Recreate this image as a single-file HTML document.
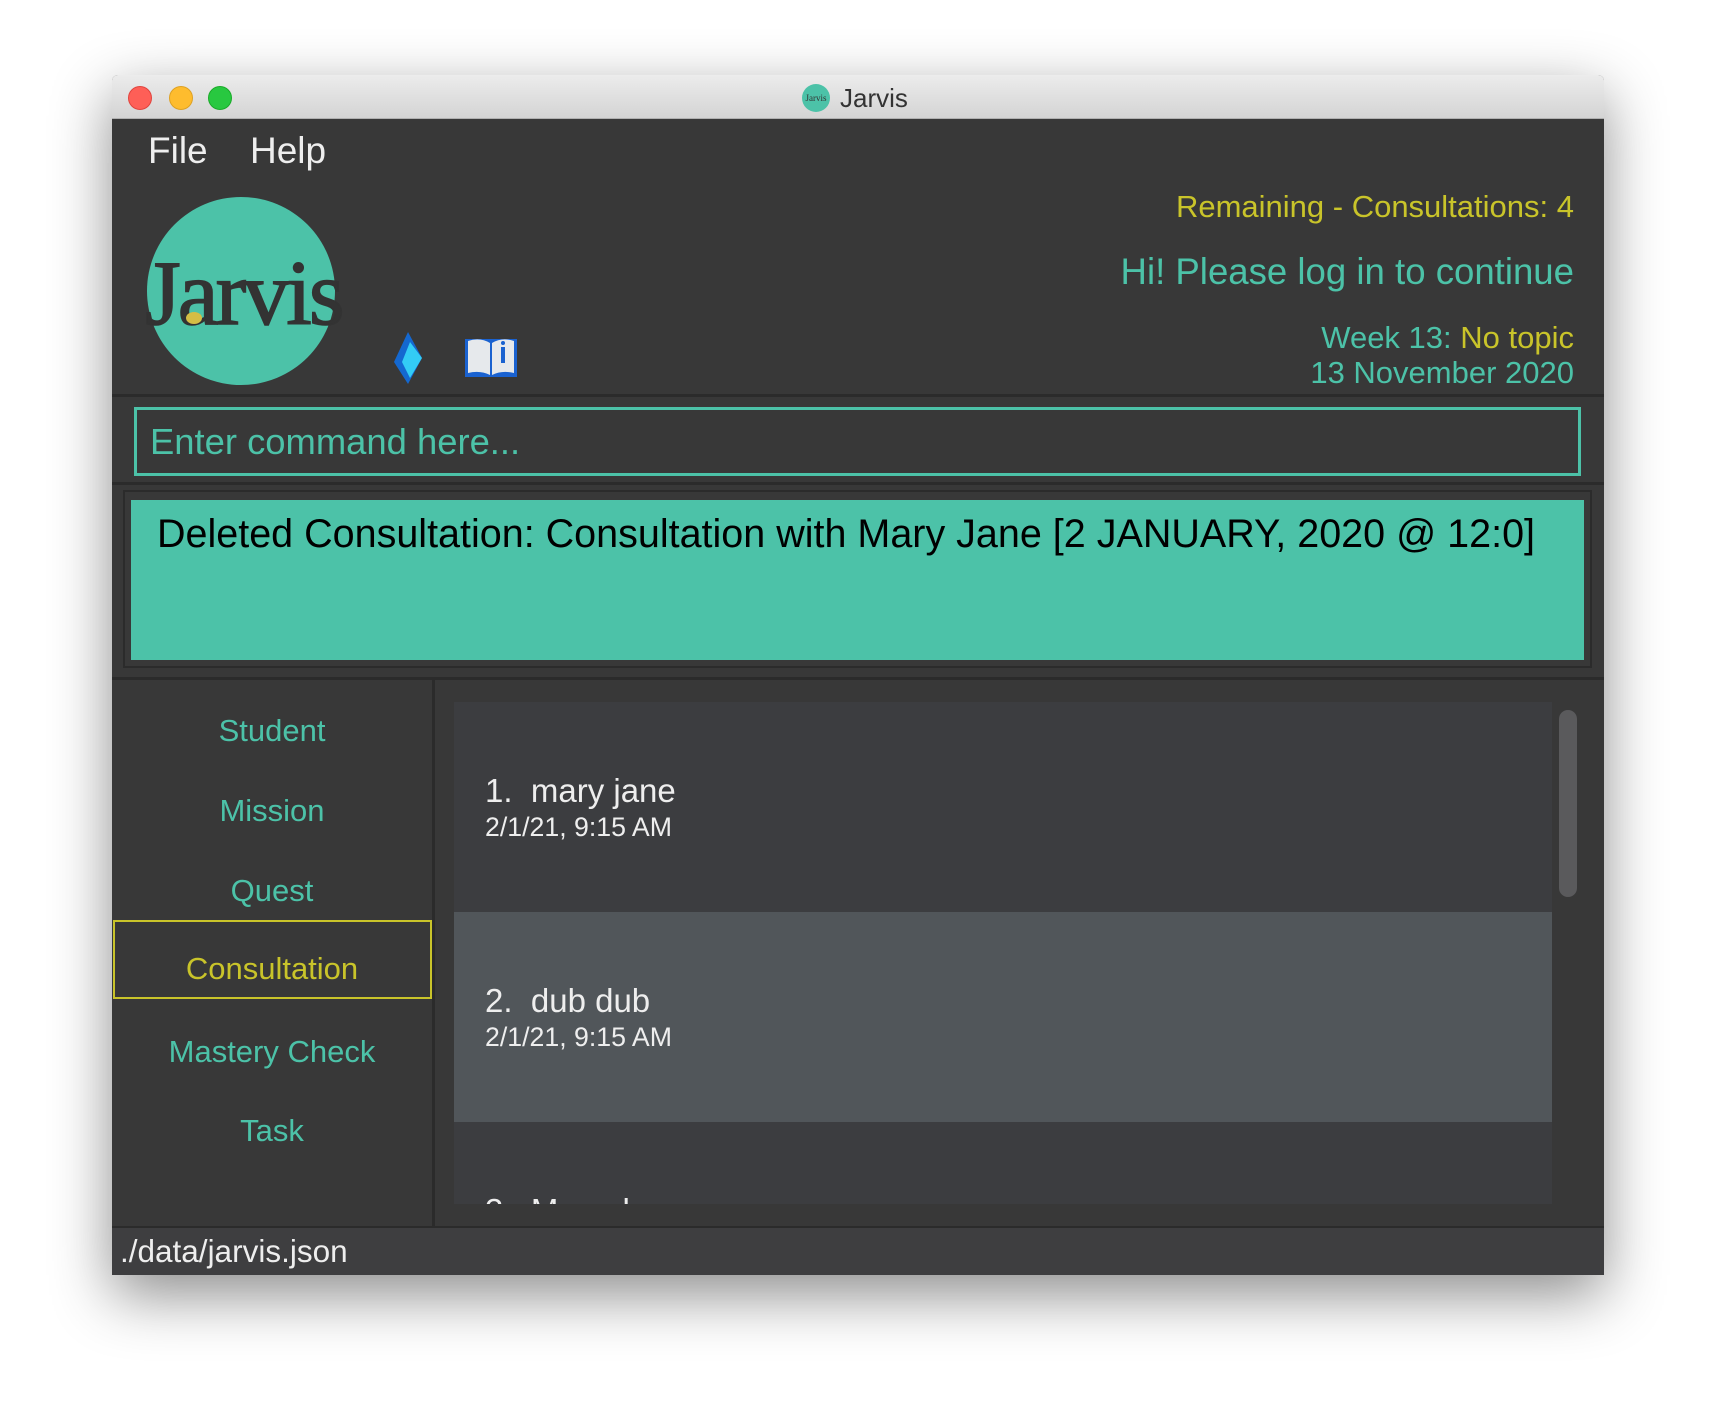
<!DOCTYPE html>
<html><head><meta charset="utf-8"><style>
*{margin:0;padding:0;box-sizing:border-box}
body{width:1716px;height:1424px;background:#fff;position:relative;overflow:hidden;font-family:"Liberation Sans",sans-serif}
.win{position:absolute;left:112px;top:75px;width:1492px;height:1200px;background:#383838;box-shadow:0 20px 60px rgba(0,0,0,.45);border-radius:6px 6px 0 0;overflow:hidden}
.title{position:absolute;left:0;top:0;width:100%;height:44px;background:linear-gradient(#ececec,#d4d4d4);border-bottom:1px solid #b0b0b0}
.tl{position:absolute;top:11px;width:24px;height:24px;border-radius:50%}
.a{position:absolute;white-space:nowrap}
.t{color:#4cc2a8}.y{color:#c9c42a}
</style></head><body>
<div class="win">
 <div class="title">
  <div class="tl" style="left:16px;background:#fe5f57;border:1px solid #e0443e"></div>
  <div class="tl" style="left:57px;background:#febc2e;border:1px solid #dea123"></div>
  <div class="tl" style="left:96px;background:#28c840;border:1px solid #1aab29"></div>
  <div class="a" style="left:690px;top:9px;width:28px;height:28px;border-radius:50%;background:#4cc2a8;font:9px 'Liberation Serif',serif;color:#333;text-align:center;line-height:28px">Jarvis</div>
  <div class="a" style="left:728px;top:8px;font-size:26px;color:#333">Jarvis</div>
 </div>
 <div class="a" style="left:36px;top:55px;font-size:37px;color:#eee">File</div>
 <div class="a" style="left:138px;top:55px;font-size:37px;color:#eee">Help</div>
 <div class="a" style="left:35px;top:122px;width:188px;height:188px;border-radius:50%;background:#4cc2a8"></div>
 <div class="a" style="left:33px;top:165px;font:92px 'Liberation Serif',serif;color:#333;letter-spacing:-3px;-webkit-text-stroke:1.5px #333">Jarvis</div>
 <div class="a" style="left:74px;top:237px;width:16px;height:12px;border-radius:50%;background:#d4bd45"></div>
 <svg class="a" style="left:280px;top:255px" width="32" height="56" viewBox="0 0 32 56"><polygon points="16,2 30,28 16,54 2,32" fill="#1468d0"/><polygon points="18,12 30,28 18,48 10,32" fill="#33ccf5"/></svg>
 <svg class="a" style="left:352px;top:260px" width="54" height="46" viewBox="0 0 54 46"><rect x="1" y="4" width="52" height="38" fill="#1a62d0"/><path d="M4 6 Q16 2 26 8 V40 Q16 35 4 38Z" fill="#e6e9ec"/><path d="M28 8 Q38 2 50 6 V38 Q38 35 28 40Z" fill="#e6e9ec"/><rect x="37" y="12" width="4" height="16" fill="#1a62d0"/><circle cx="39" cy="8" r="2" fill="#1a62d0"/></svg>
 <div class="a y" style="right:30px;top:114px;font-size:31px">Remaining - Consultations: 4</div>
 <div class="a t" style="right:30px;top:176px;font-size:36.6px">Hi! Please log in to continue</div>
 <div class="a" style="right:30px;top:245px;font-size:31px"><span class="t">Week 13: </span><span class="y">No topic</span></div>
 <div class="a t" style="right:30px;top:280px;font-size:31px">13 November 2020</div>
 <div class="a" style="left:0;top:319px;width:100%;height:3px;background:#2b2b2b"></div>
 <div class="a" style="left:22px;top:332px;width:1447px;height:69px;border:3px solid #4cc2a8"></div>
 <div class="a t" style="left:38px;top:346px;font-size:36.4px">Enter command here...</div>
 <div class="a" style="left:0;top:407px;width:100%;height:3px;background:#2b2b2b"></div>
 <div class="a" style="left:11px;top:415px;width:1469px;height:178px;border:2px solid #2b2b2b"></div>
 <div class="a" style="left:19px;top:425px;width:1453px;height:160px;background:#4cc2a8"></div>
 <div class="a" style="left:45px;top:437px;font-size:39.5px;color:#000">Deleted Consultation: Consultation with Mary Jane [2 JANUARY, 2020 @ 12:0]</div>
 <div class="a" style="left:0;top:602px;width:100%;height:3px;background:#2b2b2b"></div>
 <div class="a" style="left:320px;top:605px;width:3px;height:546px;background:#2b2b2b"></div>
 <div class="a t" style="left:0;width:320px;text-align:center;top:638px;font-size:31px">Student</div>
 <div class="a t" style="left:0;width:320px;text-align:center;top:718px;font-size:31px">Mission</div>
 <div class="a t" style="left:0;width:320px;text-align:center;top:798px;font-size:31px">Quest</div>
 <div class="a" style="left:1px;top:845px;width:319px;height:79px;border:2px solid #c9c42a"></div>
 <div class="a y" style="left:0;width:320px;text-align:center;top:876px;font-size:31px">Consultation</div>
 <div class="a t" style="left:0;width:320px;text-align:center;top:959px;font-size:31px">Mastery Check</div>
 <div class="a t" style="left:0;width:320px;text-align:center;top:1038px;font-size:31px">Task</div>
 <div class="a" style="left:342px;top:627px;width:1098px;height:502px;background:#3c3d40;overflow:hidden">
  <div class="a" style="left:0;top:210px;width:100%;height:210px;background:#51565a"></div>
  <div class="a" style="left:31px;top:70px;font-size:33px;color:#eee">1.&nbsp; mary jane</div>
  <div class="a" style="left:31px;top:110px;font-size:26.7px;color:#eee">2/1/21, 9:15 AM</div>
  <div class="a" style="left:31px;top:280px;font-size:33px;color:#eee">2.&nbsp; dub dub</div>
  <div class="a" style="left:31px;top:320px;font-size:26.7px;color:#eee">2/1/21, 9:15 AM</div>
  <div class="a" style="left:31px;top:490px;font-size:33px;color:#eee">3.&nbsp; Marvel</div>
 </div>
 <div class="a" style="left:1447px;top:635px;width:18px;height:187px;border-radius:9px;background:#5a5a5c"></div>
 <div class="a" style="left:0;top:1151px;width:100%;height:49px;background:#3e3e40;border-top:2px solid #2b2b2b"></div>
 <div class="a" style="left:8px;top:1158px;font-size:31.5px;color:#eee">./data/jarvis.json</div>
</div>
</body></html>
